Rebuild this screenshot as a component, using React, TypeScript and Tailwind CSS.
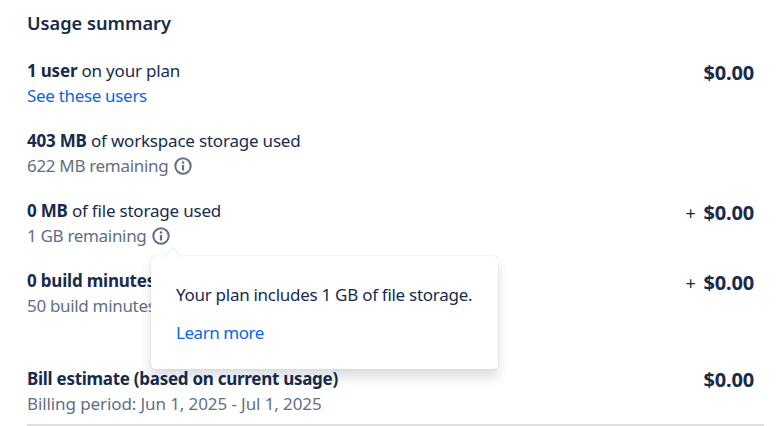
const font = { fontFamily: '"Noto Sans", sans-serif' };

function InfoIcon() {
  return (
    <svg width="20" height="20" viewBox="0 0 20 20" fill="none" className="shrink-0">
      <circle cx="10" cy="10" r="7.7" stroke="#626f86" strokeWidth="2" />
      <rect x="8.9" y="9" width="2.2" height="5.4" rx="0.6" fill="#626f86" />
      <circle cx="10" cy="6.5" r="1.25" fill="#626f86" />
    </svg>
  );
}

function Amount({ value, plus }: { value: string; plus?: boolean }) {
  return (
    <div className="pt-[2px] h-[27px] leading-[25px] text-[20px] tracking-[-0.2px] whitespace-nowrap">
      {plus && <span className="text-[18px] mr-[8px]">+</span>}
      <span className="font-bold">{value}</span>
    </div>
  );
}

function Row({ title, rest, sub, icon, amount, plus, link }: { title: string; rest?: string; sub: string; icon?: boolean; amount?: string; plus?: boolean; link?: boolean }) {
  return (
    <div className="flex justify-between h-[50px] mb-5">
      <div>
        <div className="h-[25px] leading-[25px] whitespace-nowrap">
          <span className="font-bold">{title}</span>{rest}
        </div>
        <div className={`flex items-center gap-[5px] h-[25px] leading-[25px] tracking-[-0.32px] whitespace-nowrap ${link ? "text-[#0c66e4]" : "text-[#626f86]"}`}>
          {sub}
          {icon && <InfoIcon />}
        </div>
      </div>
      {amount && <Amount value={amount} plus={plus} />}
    </div>
  );
}

export default function App() {
  return (
    <div style={font} className="relative w-[779px] h-[426px] overflow-hidden bg-white pl-[27px] pr-[25px] text-[17px] tracking-[-0.2px] text-[#172b4d]">
      <h2 className="h-[48px] pt-[10px] text-[18.2px] leading-[26px] font-semibold tracking-normal">Usage summary</h2>
      <div className="pt-[10px]">
        <Row title="1 user" rest=" on your plan" sub="See these users" link amount="$0.00" />
        <Row title="403 MB" rest=" of workspace storage used" sub="622 MB remaining" icon />
        <Row title="0 MB" rest=" of file storage used" sub="1 GB remaining" icon amount="$0.00" plus />
        <Row title="0 build minutes" rest=" used" sub="50 build minutes remaining" amount="$0.00" plus />
      </div>
      <div className="flex justify-between h-[50px] mt-[48px]">
        <div>
          <div className="h-[25px] leading-[25px] font-bold tracking-[-0.28px] whitespace-nowrap">Bill estimate (based on current usage)</div>
          <div className="h-[25px] leading-[25px] tracking-[-0.1px] text-[#626f86] whitespace-nowrap">Billing period: Jun 1, 2025 - Jul 1, 2025</div>
        </div>
        <div className="-mt-[1px]">
          <Amount value="$0.00" />
        </div>
      </div>
      <div className="mt-[8px] -mr-[10px] h-[2px] bg-[#dcdfe4]" />

      <div className="absolute left-[151px] top-[256px] w-[347px] h-[113px] rounded-[4px] bg-white shadow-[0_8px_12px_rgba(9,30,66,0.15),0_0_1px_rgba(9,30,66,0.31)] pl-[25px] pt-[26px] tracking-[-0.28px]">
        <div className="absolute left-[15px] top-[-6px] size-[13px] rotate-45 bg-white border-l border-t border-[#e9ebee]" />
        <div className="h-[25px] leading-[25px] whitespace-nowrap">Your plan includes 1 GB of file storage.</div>
        <div className="mt-[13px] h-[25px] leading-[25px] tracking-[-0.45px] text-[#0c66e4]">Learn more</div>
      </div>
    </div>
  );
}
